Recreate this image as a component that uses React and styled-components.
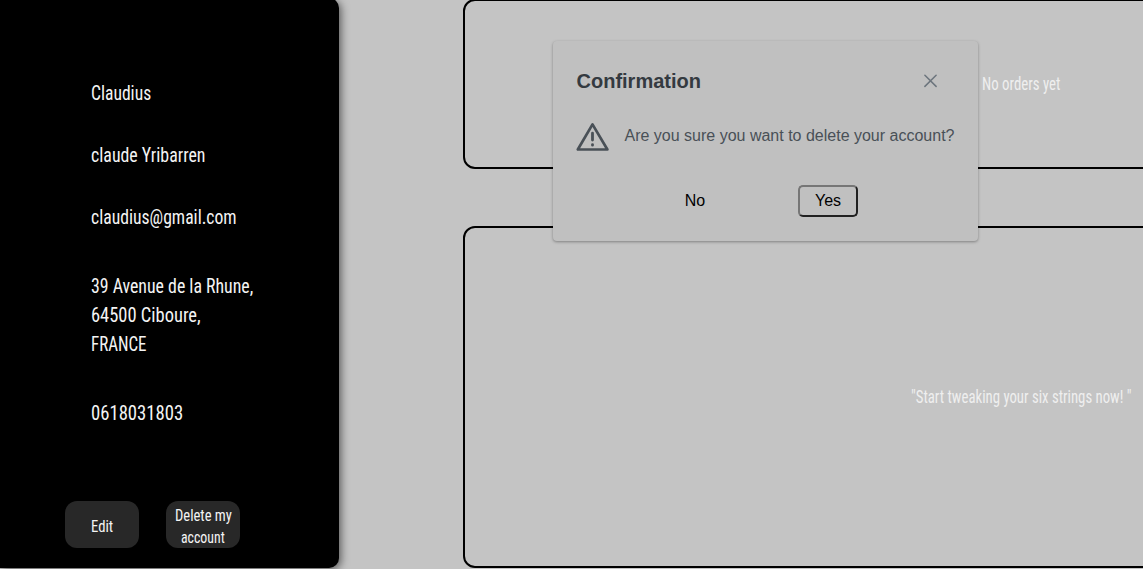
import React, { useLayoutEffect, useRef } from "react";
import styled, { createGlobalStyle } from "styled-components";

const GlobalStyle = createGlobalStyle`
  * { box-sizing: border-box; }
  html, body { margin: 0; height: 100%; overflow: hidden; background: #c4c4c4; }
  body { font-family: "Liberation Sans", Arial, sans-serif; }
`;

const Page = styled.div`
  position: relative;
  display: flex;
  height: 569px;
  overflow: hidden;
`;

const Sidebar = styled.aside`
  display: flex;
  flex-direction: column;
  flex: 0 0 339px;
  height: 570px;
  margin-top: -2px;
  padding: 81px 0 0 91px;
  border-radius: 0 10px 10px 0;
  background: #000;
  box-shadow: 2px 2px 8px rgba(0, 0, 0, 0.55);
`;

const Fields = styled.div`
  display: flex;
  flex-direction: column;
`;

const Field = styled.div`
  margin-bottom: ${(p) => p.$gap}px;
`;

const Line = styled.div`
  display: flex;
  justify-content: flex-start;
  height: ${(p) => p.$height || 29}px;
  line-height: ${(p) => p.$height || 29}px;
  width: ${(p) => p.$width}px;
`;

const Condensed = styled.span`
  flex: none;
  width: max-content;
  font-family: Roboto, "Liberation Sans", sans-serif;
  font-stretch: 75%;
  font-weight: ${(p) => p.$weight || 430};
  font-size: ${(p) => p.$size || 20.5}px;
  color: ${(p) => p.$color || "#f4f4f4"};
  white-space: pre;
  transform-origin: 0 50%;
`;

function FitLine({ width, height, children, ...rest }) {
  const ref = useRef(null);
  useLayoutEffect(() => {
    const el = ref.current;
    const fit = () => {
      el.style.transform = `scaleX(${width / el.offsetWidth})`;
    };
    fit();
    document.fonts.ready.then(fit);
  }, [width, children]);
  return (
    <Line $width={width} $height={height}>
      <Condensed ref={ref} {...rest}>{children}</Condensed>
    </Line>
  );
}

const Actions = styled.div`
  display: flex;
  gap: 27px;
  margin: 73px 0 0 -26px;
`;

const ActionButton = styled.button`
  display: flex;
  flex-direction: column;
  align-items: center;
  justify-content: center;
  width: 74px;
  height: 47px;
  padding: 4px 0 0;
  border: 0;
  border-radius: 12px;
  background: #282828;
`;

const Main = styled.main`
  display: flex;
  flex-direction: column;
  gap: 57px;
  flex: none;
  width: 1116px;
  margin: -1px 0 0 124px;
`;

const Panel = styled.section`
  display: flex;
  align-items: center;
  justify-content: center;
  height: ${(p) => p.$height}px;
  border: 2px solid #000;
  border-radius: 12px;
`;

const Dialog = styled.div`
  position: absolute;
  left: 553px;
  top: 41px;
  width: 425px;
  height: 200px;
  padding: 24px 24px 0 23.5px;
  border-radius: 4px;
  background: #c0c0c0;
  box-shadow: 0 1px 3px rgba(0, 0, 0, 0.35);
`;

const DialogHeader = styled.header`
  display: flex;
  align-items: center;
  justify-content: space-between;
  height: 32px;
`;

const Title = styled.h2`
  margin: 0;
  font-size: 20px;
  line-height: 32px;
  color: #343a40;
`;

const CloseButton = styled.button`
  display: flex;
  align-items: center;
  justify-content: center;
  width: 32px;
  height: 32px;
  margin-right: 7.5px;
  padding: 0;
  border: 0;
  background: none;
`;

const Message = styled.div`
  display: flex;
  gap: 16px;
  height: 32px;
  margin-top: 24px;
  font-size: 16px;
  line-height: 29px;
  color: #495057;
  white-space: nowrap;

  svg {
    flex: none;
    overflow: visible;
  }
`;

const Choices = styled.footer`
  display: flex;
  justify-content: space-between;
  margin: 32px 96px 0 88.5px;
`;

const Choice = styled.button`
  width: 60px;
  height: 32px;
  padding: 0;
  font: 16px "Liberation Sans", Arial, sans-serif;
  color: #000;
  background: none;
  border: 2px solid;
  border-radius: 5px;
  border-color: ${(p) => (p.$outlined ? "#767676 #212121 #212121 #767676" : "transparent")};
`;

export default function App() {
  return (
    <>
      <GlobalStyle />
      <Page>
        <Sidebar>
          <Fields>
            <Field $gap={33}><FitLine width={60}>Claudius</FitLine></Field>
            <Field $gap={33}><FitLine width={114}>claude Yribarren</FitLine></Field>
            <Field $gap={40}><FitLine width={145.5}>claudius@gmail.com</FitLine></Field>
            <Field $gap={40}>
              <FitLine width={162.5}>39 Avenue de la Rhune,</FitLine>
              <FitLine width={110}>64500 Ciboure,</FitLine>
              <FitLine width={55.5}>FRANCE</FitLine>
            </Field>
            <Field $gap={0}><FitLine width={92}>0618031803</FitLine></Field>
          </Fields>
          <Actions>
            <ActionButton>
              <FitLine width={22} height={22} $size={16}>Edit</FitLine>
            </ActionButton>
            <ActionButton>
              <FitLine width={56.5} height={22} $size={16}>Delete my</FitLine>
              <FitLine width={44} height={22} $size={16}>account</FitLine>
            </ActionButton>
          </Actions>
        </Sidebar>
        <Main>
          <Panel $height={170}>
            <FitLine width={78} height={24} $size={17.5} $color="#efefef">No orders yet</FitLine>
          </Panel>
          <Panel $height={342}>
            <FitLine width={220.5} height={24} $size={17.5} $color="#efefef">{'"Start tweaking your six strings now! "'}</FitLine>
          </Panel>
        </Main>
        <Dialog role="dialog">
          <DialogHeader>
            <Title>Confirmation</Title>
            <CloseButton aria-label="Close">
              <svg width="14" height="14" viewBox="0 0 14 14" fill="none" stroke="#6c757d" strokeWidth="1.5" strokeLinecap="round">
                <path d="M0.9 1.2 12.1 12.4M12.1 1.2 0.9 12.4" />
              </svg>
            </CloseButton>
          </DialogHeader>
          <Message>
            <svg width="32" height="32" viewBox="0 0 32 32" fill="none" stroke="#495057" strokeLinejoin="round" strokeLinecap="round">
              <path d="M15.5 3.4 0.8 28.5H30.4Z" strokeWidth="2.7" />
              <path d="M15.5 12.2V19M15.5 23.6V24.2" strokeWidth="2.8" />
            </svg>
            <span>Are you sure you want to delete your account?</span>
          </Message>
          <Choices>
            <Choice>No</Choice>
            <Choice $outlined>Yes</Choice>
          </Choices>
        </Dialog>
      </Page>
    </>
  );
}
